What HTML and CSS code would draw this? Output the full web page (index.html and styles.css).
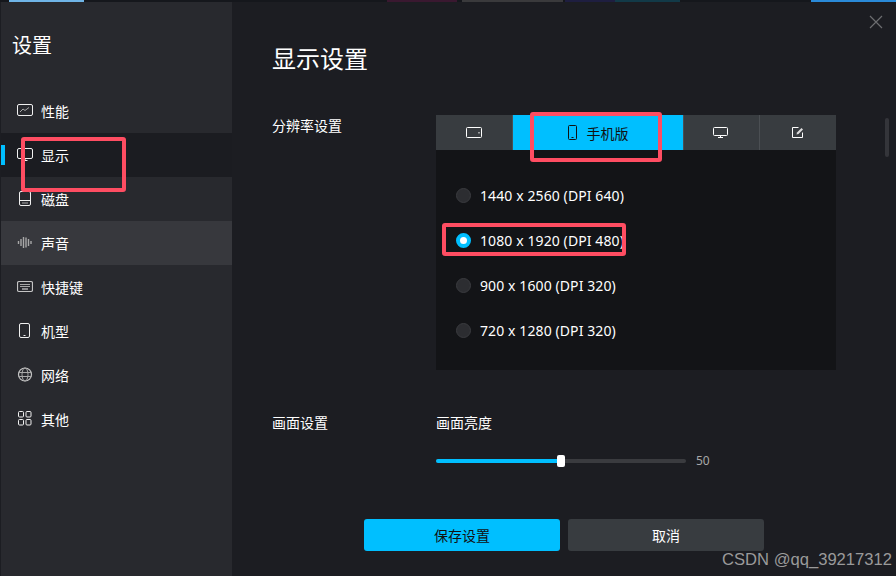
FILE: index.html
```html
<!DOCTYPE html>
<html lang="zh-CN">
<head>
    <meta charset="UTF-8">
    <meta name="viewport" content="width=device-width, initial-scale=1.0">
    <title>设置</title>
    <link rel="stylesheet" href="styles.css">
</head>
<body>

    <!-- Window behind the dialog, only its bottom edge shows -->
    <div class="backdrop">
        <span class="strip-a"></span>
        <span class="strip-b"></span>
        <span class="strip-c"></span>
        <span class="strip-d"></span>
        <span class="strip-e"></span>
        <span class="strip-f"></span>
    </div>

    <div class="dialog">
        <!-- Sidebar -->
        <div class="sidebar">
            <h3>设置</h3>
            <a href="#" class="nav-item">
                <svg class="nav-icon" viewBox="0 0 16 16"><rect x="0.5" y="1.5" width="15" height="11" rx="1.5"/><path class="dim" d="M3 9l3-3 2 1.5 4-3"/></svg>
                性能
            </a>
            <a href="#" class="nav-item active">
                <svg class="nav-icon" viewBox="0 0 16 16"><rect x="0.5" y="1.5" width="15" height="10" rx="1.5"/><path d="M8 11.500v2M5.500 13.500h5"/></svg>
                显示
            </a>
            <a href="#" class="nav-item">
                <svg class="nav-icon" viewBox="0 0 16 16"><rect x="2.500" y="0.500" width="11" height="14" rx="1.500"/><path d="M2.500 9.500h11"/><path class="dim" d="M5 12h6"/></svg>
                磁盘
            </a>
            <a href="#" class="nav-item hover">
                <svg class="nav-icon" viewBox="0 0 16 16"><path class="dim bars" d="M1.500 6v3M4 4v7M6.500 2v11M9 2.500v10M11.500 4v7M14 6v3"/></svg>
                声音
            </a>
            <a href="#" class="nav-item">
                <svg class="nav-icon" viewBox="0 0 16 16"><rect class="soft" x="0.500" y="2.500" width="15" height="10" rx="1.500"/><path class="dim" d="M3 5.500h10M3 7.500h10"/><path d="M5 10h6"/></svg>
                快捷键
            </a>
            <a href="#" class="nav-item">
                <svg class="nav-icon" viewBox="0 0 16 16"><rect x="2.500" y="0.500" width="10" height="14" rx="1.500"/><path d="M6.500 12.500h2"/></svg>
                机型
            </a>
            <a href="#" class="nav-item">
                <svg class="nav-icon" viewBox="0 0 16 16"><circle class="soft" cx="8" cy="7.500" r="6.500"/><ellipse class="dim" cx="8" cy="7.500" rx="3" ry="6.500"/><path class="dim" d="M1.500 5.500h13M1.500 9.500h13"/></svg>
                网络
            </a>
            <a href="#" class="nav-item">
                <svg class="nav-icon" viewBox="0 0 16 16"><rect x="1.500" y="0.500" width="5" height="5.500" rx="1"/><rect x="9" y="0.500" width="5" height="5.500" rx="1"/><rect x="1.500" y="8.500" width="5" height="5.500" rx="1"/><rect x="9" y="8.500" width="5" height="5.500" rx="1"/></svg>
                其他
            </a>
        </div>

        <!-- Main Content -->
        <div class="main">
            <svg class="close" viewBox="0 0 14 14"><path d="M1 1l12 12M13 1L1 13"/></svg>
            <h2>显示设置</h2>

            <div class="section resolution">
                <div class="section-label">分辨率设置</div>
                <div class="section-body">
                    <div class="tabs">
                        <div class="tab tab-side">
                            <svg class="tab-icon" viewBox="0 0 16 12"><rect x="0.500" y="0.500" width="15" height="10" rx="1"/><path d="M13 5v1.500"/></svg>
                        </div>
                        <div class="tab selected">
                            <svg class="tab-icon phone" viewBox="0 0 10 16"><rect x="0.500" y="0.500" width="8" height="14" rx="1"/><path d="M3.500 12.500h2"/></svg>
                            手机版
                        </div>
                        <div class="tab tab-side">
                            <svg class="tab-icon monitor" viewBox="0 0 16 12"><rect x="0.500" y="0.500" width="14" height="8" rx="1"/><path d="M7.500 8.500v2M5 10.500h5"/></svg>
                        </div>
                        <div class="tab tab-side">
                            <svg class="tab-icon edit" viewBox="0 0 12 12"><path d="M10.500 5.500v5h-10v-10h6"/><path class="pen" d="M4.500 7.500L5 5.500 9.500 1 11 2.500 6.500 7z"/></svg>
                        </div>
                    </div>
                    <div class="options">
                        <div class="option"><span class="radio"></span>1440 x 2560 (DPI 640)</div>
                        <div class="option"><span class="radio checked"></span>1080 x 1920 (DPI 480)</div>
                        <div class="option"><span class="radio"></span>900 x 1600 (DPI 320)</div>
                        <div class="option"><span class="radio"></span>720 x 1280 (DPI 320)</div>
                    </div>
                </div>
            </div>

            <div class="section picture">
                <div class="section-label">画面设置</div>
                <div class="section-body">
                    <div class="section-label">画面亮度</div>
                    <div class="slider-row">
                        <div class="slider">
                            <div class="slider-fill" style="width: 50%"></div>
                            <div class="slider-thumb"></div>
                        </div>
                        <span class="slider-value">50</span>
                    </div>
                </div>
            </div>

            <div class="buttons">
                <button type="button" class="btn btn-primary">保存设置</button>
                <button type="button" class="btn">取消</button>
            </div>

            <div class="scrollbar"></div>
        </div>
    </div>

    <!-- Red boxes drawn on the screenshot -->
    <div class="mark mark-nav"></div>
    <div class="mark mark-tab"></div>
    <div class="mark mark-option"></div>

    <div class="watermark">CSDN @qq_39217312</div>

</body>
</html>
```

FILE: styles.css
```css
* {
    margin: 0;
    padding: 0;
    box-sizing: border-box;
}

body {
    width: 896px;
    height: 576px;
    overflow: hidden;
    position: relative;
    background-color: #1c1d22;
    font-family: "Noto Sans CJK SC", "Noto Sans", sans-serif;
    color: #fff;
}

.backdrop {
    height: 2px;
    display: flex;
    background-color: #15171c;
}

.backdrop span {
    display: block;
    height: 100%;
}

.strip-a {
    width: 75px;
    margin-left: 9px;
    background-color: #6fb4e6;
}

.strip-b {
    width: 70px;
    margin-left: 303px;
    background-color: #3a1830;
}

.strip-c {
    width: 101px;
    margin-left: 5px;
    background-color: #3a3a3c;
}

.strip-d {
    width: 50px;
    margin-left: 2px;
    background-color: #1e1e40;
}

.strip-e {
    width: 65px;
    background-color: #123a48;
}

.strip-f {
    width: 85px;
    margin-left: 131px;
    background-color: #2a8ad8;
}

.dialog {
    display: flex;
    height: 574px;
}

/* Sidebar styling */
.sidebar {
    width: 231px;
    margin-left: 1px;
    flex-shrink: 0;
    background-color: #28292e;
}

.sidebar h3 {
    font-size: 20px;
    font-weight: 400;
    line-height: 26px;
    padding: 30px 0 31px 11px;
}

.nav-item {
    position: relative;
    display: flex;
    align-items: center;
    height: 44px;
    padding-left: 16px;
    font-size: 14px;
    color: #fff;
    text-decoration: none;
}

.nav-item.active {
    background-color: #1b1c21;
}

.nav-item.active::before {
    content: "";
    position: absolute;
    left: 0;
    top: 12px;
    width: 4px;
    height: 20px;
    background-color: #00bfff;
}

.nav-item.hover {
    background-color: #37383d;
}

.nav-icon {
    width: 16px;
    height: 16px;
    margin-right: 8px;
    fill: none;
    stroke: #f0f0f0;
    stroke-width: 1;
}

.nav-icon .dim {
    stroke: #a8a8a8;
}

.nav-icon .soft {
    stroke: #c4c4c4;
    stroke-width: 1.2;
}

.nav-icon .bars {
    stroke-width: 1.4;
}

/* Main Content */
.main {
    flex: 1;
    position: relative;
    padding-left: 40px;
}

.main h2 {
    font-size: 24px;
    font-weight: 400;
    line-height: 34px;
    padding-top: 39px;
}

.close {
    position: absolute;
    right: 13px;
    top: 13px;
    width: 14px;
    height: 14px;
    fill: none;
    stroke: #6c6d70;
    stroke-width: 1.2;
}

.section {
    display: flex;
}

.section-label {
    width: 164px;
    flex-shrink: 0;
    font-size: 14px;
    line-height: 20px;
}

.resolution {
    margin-top: 40px;
}

.section-body {
    width: 400px;
}

.tabs {
    display: flex;
    height: 35px;
}

.tab {
    display: flex;
    align-items: center;
    justify-content: center;
    background-color: #383c40;
    font-size: 14px;
}

.tab-side {
    width: 76px;
    flex-shrink: 0;
    border-right: 1px solid #4b4f53;
}

.tab-side:first-child {
    width: 77px;
}

.tab-side:last-child {
    border-right: none;
}

.tab.selected {
    flex: 1;
    background-color: #00bfff;
    color: #111;
    border-right: 1px solid #4b4f53;
}

.tab-icon {
    width: 16px;
    height: 12px;
    fill: none;
    stroke: #fff;
    stroke-width: 1;
}

.tab-icon.monitor {
    margin-right: 2px;
}

.tab-icon.phone {
    width: 10px;
    height: 16px;
    margin-right: 9px;
    stroke: #111;
}

.tab-icon.edit {
    width: 12px;
    height: 12px;
}

.pen {
    fill: #ddd;
    stroke: none;
}

.options {
    height: 220px;
    padding-top: 23px;
    background-color: #131417;
}

.option {
    display: flex;
    align-items: center;
    height: 45px;
    padding-left: 20px;
    font-family: "Noto Sans", "Noto Sans CJK SC", sans-serif;
    font-size: 14px;
    letter-spacing: 0.1px;
}

.radio {
    width: 15px;
    height: 15px;
    margin-right: 9px;
    border-radius: 50%;
    background-color: #2c2d31;
    border: 1px solid #3a3b3f;
}

.radio.checked {
    background-color: #fff;
    border: 4px solid #00bfff;
}

.picture {
    margin-top: 42px;
}

.slider-row {
    display: flex;
    align-items: center;
    margin-top: 20px;
}

.slider {
    position: relative;
    width: 250px;
    height: 4px;
    border-radius: 2px;
    background-color: #3a3b3f;
}

.slider-fill {
    height: 100%;
    border-radius: 2px;
    background-color: #00bfff;
}

.slider-thumb {
    position: absolute;
    left: 121px;
    top: -4px;
    width: 8px;
    height: 12px;
    border-radius: 2px;
    background-color: #fff;
}

.slider-value {
    margin-left: 10px;
    font-family: "Noto Sans", sans-serif;
    font-size: 12px;
    color: #a8a8a8;
}

.buttons {
    display: flex;
    gap: 8px;
    margin-top: 50px;
    margin-left: 92px;
}

.btn {
    width: 196px;
    height: 32px;
    border: none;
    border-radius: 3px;
    background-color: #383c40;
    color: #fff;
    font-family: inherit;
    font-size: 14px;
}

.btn-primary {
    background-color: #00bfff;
    color: #111;
}

.scrollbar {
    position: absolute;
    left: 653px;
    top: 116px;
    width: 4px;
    height: 39px;
    border-radius: 2px;
    background-color: #34353a;
}

/* Annotation boxes */
.mark {
    position: absolute;
    border: 4px solid #ff4d62;
    border-radius: 3px;
}

.mark-nav {
    left: 21px;
    top: 137px;
    width: 105px;
    height: 55px;
}

.mark-tab {
    left: 530px;
    top: 112px;
    width: 132px;
    height: 50px;
}

.mark-option {
    left: 442px;
    top: 223px;
    width: 184px;
    height: 33px;
}

.watermark {
    position: absolute;
    right: 4px;
    top: 550px;
    font-family: "Liberation Sans", sans-serif;
    font-size: 16.6px;
    line-height: 20px;
    color: #9a9a9a;
}
```
